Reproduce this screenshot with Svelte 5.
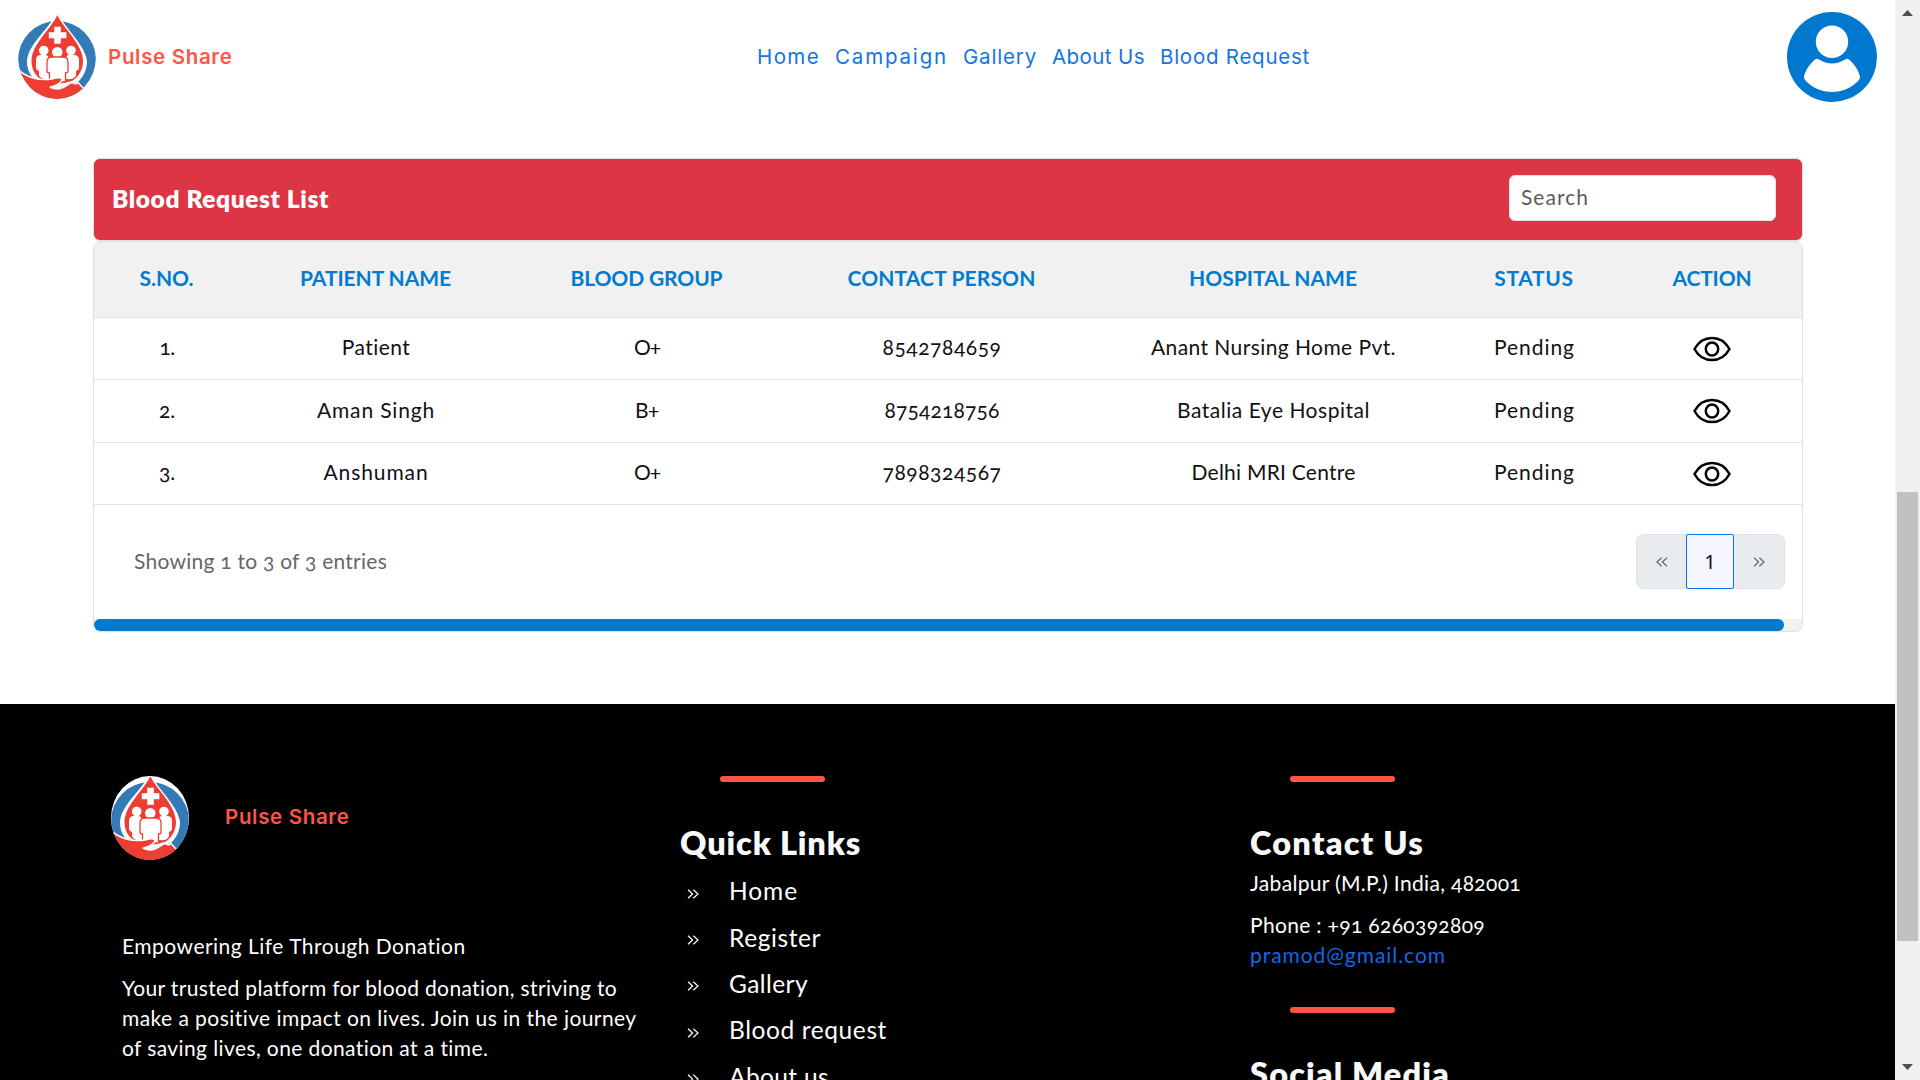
<script>
  const nav = [
    ['Home', 63], ['Campaign', 113], ['Gallery', 74], ['About Us', 93], ['Blood Request', 150]
  ];
  const columns = [
    ['S.NO.', 54], ['PATIENT NAME', 151], ['BLOOD GROUP', 152], ['CONTACT PERSON', 188],
    ['HOSPITAL NAME', 168], ['STATUS', 79.5], ['ACTION', 79]
  ];
  const requests = [
    [['1.', 15], ['Patient', 69], ['O+', 26], ['8542784659', 119], ['Anant Nursing Home Pvt.', 245], ['Pending', 81]],
    [['2.', 16], ['Aman Singh', 118], ['B+', 24], ['8754218756', 115], ['Batalia Eye Hospital', 193], ['Pending', 81]],
    [['3.', 16], ['Anshuman', 105], ['O+', 26], ['7898324567', 119], ['Delhi MRI Centre', 164], ['Pending', 81]]
  ];
  const quickLinks = [['Home', 69], ['Register', 92], ['Gallery', 79], ['Blood request', 158], ['About us', 100]];
  const about = [
    ['Your trusted platform for blood donation, striving to', 495],
    ['make a positive impact on lives. Join us in the journey', 515],
    ['of saving lives, one donation at a time.', 367]
  ];

  // Tracks a label in or out so that it occupies the given width.
  function fit(node, width) {
    const natural = node.getBoundingClientRect().width;
    const count = node.textContent.length;
    node.style.letterSpacing = `${(width - natural) / count}px`;
  }
</script>

{#snippet logo()}
  <svg class="logo" viewBox="0 0 78 84" aria-label="Pulse Share logo">
    <rect width="78" height="84" fill="#fff" />
    <circle cx="39" cy="45" r="39" fill="#347ab7" />
    <path d="M39 -4C34 12 9 29 9 47C9 58 16 66 24 69L39 74L60 67C66 61 69 54 69 46C67 29 45 12 39 -4Z" fill="#fff" />
    <path d="M39.3 0C34 13 13.5 29 13.5 46C13.5 54 17 61 24 65L40 69L54 66C61 62 65 54 65 46C65 29 45 13 39.3 0Z" fill="#ee3e33" />
    <path d="M36.200 11.800h6.600v5.400h5.600v6h-5.600v5.600h-6.600v-5.600h-5.400v-6h5.400z" fill="#fff" />
    <g fill="#fff">
      <circle cx="25.700" cy="35.500" r="4.800" />
      <circle cx="53" cy="35.500" r="4.800" />
      <path d="M18 45q0-5 5-5h5q3 1 3 5v19q-9 1-10-4V56q-3-1-3-3z" />
      <path d="M61 45q0-5-5-5h-6q-2 1-2 5v19q9 1 10-4V56q3-1 3-3z" />
    </g>
    <g fill="#fff" stroke="#ee3e33" stroke-width="1.300">
      <circle cx="39.300" cy="37.300" r="5.900" />
      <path d="M29 47q0-5 5-5h11q5 0 5 5v9q0 2-2.500 2v9H31.500v-9Q29 58 29 56z" />
    </g>
    <path d="M-2 53C10 64 22 66 34 64Q43 61.500 44 64.500Q43 69 33 72C40 75 47 70 53 67.500L58 69L60 67.500L67 75L58 90H6Z" fill="#ee3e33" stroke="#fff" stroke-width="1.400" />
    <path d="M32 72.300Q40 75.500 46 72L54 67" fill="none" stroke="#fff" stroke-width="1.600" />
  </svg>
{/snippet}

{#snippet chevrons()}
  <svg class="chevrons" viewBox="0 0 12 10"><path d="M1 .8 5.600 5 1 9.200M6.400 .8 11 5 6.400 9.200" /></svg>
{/snippet}

<div class="screen">
  <div class="page">
    <header>
      <div class="brand">{@render logo()}<span use:fit={124.5}>Pulse Share</span></div>
      <nav>
        {#each nav as [label, w]}<a href="#top"><span use:fit={w}>{label}</span></a>{/each}
      </nav>
      <svg class="avatar" viewBox="0 0 90 90">
        <circle cx="45" cy="45" r="45" fill="#0078d0" />
        <circle cx="45" cy="29.700" r="16.200" fill="#fff" />
        <path d="M28 47.500Q30 46 32 47.500Q45 55.500 58 47.500Q60 46 62 47.500C68 53 72 59 73 65Q73 66.500 72 68C58 84 32 84 18 68Q17 66.500 17 65C18 59 22 53 28 47.500Z" fill="#fff" />
      </svg>
    </header>

    <main>
      <section class="title-card">
        <h1><span use:fit={217}>Blood Request List</span></h1>
        <div class="search"><span use:fit={68}>Search</span></div>
      </section>

      <section class="table-card">
        <div class="row head">
          {#each columns as [label, w]}<div><span use:fit={w}>{label}</span></div>{/each}
        </div>
        {#each requests as cells}
          <div class="row">
            {#each cells as [text, w]}<div class="cell"><span use:fit={w}>{text}</span></div>{/each}
            <div>
              <svg class="eye" viewBox="0 0 38 26">
                <path d="M1.500 13C9.500 -1.800 28.500 -1.800 36.500 13C28.500 27.800 9.500 27.800 1.500 13Z" />
                <ellipse cx="19" cy="13" rx="6.200" ry="6.500" />
              </svg>
            </div>
          </div>
        {/each}
        <div class="table-foot">
          <span class="count"><span use:fit={253}>Showing 1 to 3 of 3 entries</span></span>
          <div class="pager">
            <div class="prev">{@render chevrons()}</div>
            <div class="current">1</div>
            <div class="next">{@render chevrons()}</div>
          </div>
        </div>
        <div class="track"><div class="thumb"></div></div>
      </section>
    </main>

    <footer>
      <div class="about">
        <div class="brand">{@render logo()}<span use:fit={124.5}>Pulse Share</span></div>
        <p class="lead"><span use:fit={344}>Empowering Life Through Donation</span></p>
        <p>{#each about as [line, w]}<span class="line"><span use:fit={w}>{line}</span></span>{/each}</p>
      </div>
      <div class="col">
        <div class="bar"></div>
        <h2><span use:fit={181}>Quick Links</span></h2>
        <ul>
          {#each quickLinks as [label, w]}<li>{@render chevrons()}<span use:fit={w}>{label}</span></li>{/each}
        </ul>
      </div>
      <div class="col contact">
        <div class="bar"></div>
        <h2><span use:fit={174}>Contact Us</span></h2>
        <p class="address"><span use:fit={271}>Jabalpur (M.P.) India, 482001</span></p>
        <p><span use:fit={235}>Phone : +91 6260392809</span></p>
        <p class="mail"><span use:fit={196}>pramod@gmail.com</span></p>
        <div class="bar"></div>
        <h2><span use:fit={200}>Social Media</span></h2>
      </div>
    </footer>
  </div>

  <aside>
    <svg viewBox="0 0 11 6"><path d="M5.500 0 11 6H0z" /></svg>
    <div class="handle"></div>
    <svg viewBox="0 0 11 6"><path d="M0 0H11L5.500 6z" /></svg>
  </aside>
</div>

<style>
  :global(body) { margin: 0; overflow: hidden; }
  * { box-sizing: border-box; }
  .screen {
    display: flex;
    width: 1920px;
    height: 1080px;
    overflow: hidden;
    background: #fff;
    font: 400 21px/30px Lato, "Open Sans", sans-serif;
    font-variant-numeric: oldstyle-nums;
    color: #111;
    white-space: nowrap;
  }
  .page { width: 1895px; height: 1080px; overflow: hidden; display: flex; flex-direction: column; }
  h1, h2, p, ul { margin: 0; padding: 0; }

  header {
    flex: none;
    height: 114px;
    padding: 0 18px;
    display: grid;
    grid-template-columns: 739px 1fr 90px;
    align-items: center;
  }
  .brand {
    display: flex;
    align-items: center;
    gap: 12px;
    font: 600 20.500px/30px Inter, sans-serif;
    color: #ff5549;
  }
  .logo { width: 78px; height: 84px; display: block; border-radius: 50%; }
  nav { display: flex; gap: 15px; font: 400 20.500px/30px Inter, sans-serif; }
  nav a { color: #1474e0; text-decoration: none; }
  .avatar { width: 90px; height: 90px; }

  main { flex: none; height: 590px; padding: 44px 92px 0 93px; }
  .title-card {
    height: 83px;
    border: 1px solid #dee2e6;
    border-radius: 7px;
    background: #dc3545;
    display: flex;
    align-items: center;
    justify-content: space-between;
    padding: 0 26px 3px 18px;
  }
  h1 { font-size: 24.500px; line-height: 30px; padding-top: 2px; font-weight: 800; color: #fff; }
  .search {
    width: 267px;
    height: 46px;
    border: 1px solid #dee2e6;
    border-radius: 6px;
    background: #fff;
    padding: 6px 11px;
    color: #595c5f;
  }
  .table-card {
    height: 391px;
    border: 1px solid #dee2e6;
    border-radius: 7px;
    overflow: hidden;
  }
  .row {
    display: grid;
    grid-template-columns: 145px 273px 269px 321px 342px 180px 176px;
    height: 62px;
    border-bottom: 1px solid #dee2e6;
    align-items: center;
    text-align: center;
  }
  .row:nth-child(3) { height: 63px; }
  .cell { padding: 0 0 3px 1px; }
  .head {
    height: 76px;
    background: #f1f1f1;
    color: #007bd0;
    font-weight: 700;
    padding-bottom: 4px;
  }
  .eye { display: block; margin: 0 auto; width: 38px; height: 26px; fill: none; stroke: #000; stroke-width: 2.500; stroke-linejoin: round; }
  .table-foot {
    height: 114px;
    display: flex;
    align-items: center;
    justify-content: space-between;
    padding: 0 17px 2px 40px;
  }
  .count { color: #666; }
  .pager { display: flex; width: 149px; height: 55px; color: #111; font: 400 20px/30px "Noto Sans", sans-serif; font-variant-numeric: lining-nums; }
  .pager > div { display: flex; align-items: center; justify-content: center; padding-top: 2px; background: #e8ecef; border: 1px solid #dee2e6; }
  .pager .prev { width: 50px; border-radius: 8px 0 0 8px; border-right: 0; }
  .pager .prev .chevrons { transform: scaleX(-1); }
  .pager .next { width: 51px; border-radius: 0 8px 8px 0; border-left: 0; }
  .pager .current { width: 48px; background: #f5f5ff; border: 1px solid #0d6efd; border-radius: 2px; }
  .chevrons { width: 12px; height: 10px; fill: none; stroke: currentColor; stroke-width: 1.200; }
  .pager .chevrons { color: #666; }
  .track { height: 12px; background: #f1f1f1; }
  .thumb { width: 1690px; height: 12px; border-radius: 6px; background: #007bd0; }

  footer {
    flex: none;
    height: 480px;
    background: #000;
    color: #fff;
    display: grid;
    grid-template-columns: 570px 570px 1fr;
    padding: 72px 0 0 110px;
  }
  .about .brand { gap: 36px; margin: 0 0 71px 1px; }
  .about .brand span { padding-bottom: 2px; }
  .about p { margin-left: 12px; }
  .about .lead { margin-bottom: 12px; }
  .line { display: block; }
  .bar { width: 105px; height: 6px; border-radius: 3px; background: #ff5549; margin-left: 40px; }
  h2 { margin-top: 42px; font-size: 32.500px; line-height: 38px; font-weight: 800; color: #f8f9fa; }
  ul { list-style: none; margin-top: 6px; }
  li { height: 46.400px; display: flex; align-items: center; gap: 30px; padding-left: 7px; font-size: 24.500px; line-height: 36px; }
  li .chevrons { margin-top: 5px; }
  .address { margin: 6px 0 12px; }
  .mail { color: #1267ea; margin-bottom: 37px; }

  aside {
    width: 25px;
    height: 1080px;
    background: #f0f0f0;
    display: flex;
    flex-direction: column;
    align-items: center;
    justify-content: space-between;
    padding: 10px 0;
  }
  aside svg { width: 11px; height: 6px; fill: #505050; display: block; }
  .handle { width: 21px; height: 449px; background: #c1c1c1; margin: 353px 0 0; }
</style>
